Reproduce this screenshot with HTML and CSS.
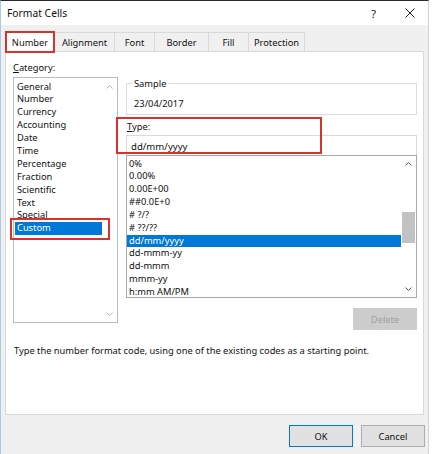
FILE: index.html
```html
<!DOCTYPE html>
<html>
<head>
<meta charset="utf-8">
<link rel="stylesheet" href="styles.css">
</head>
<body>
<div class="dialog">
  <div class="titlebar">
    <span class="title">Format Cells</span>
    <span class="help">?</span>
    <svg class="close" width="10" height="10" viewBox="0 0 10 10"><path d="M0.5 0.5L9.5 9.5M9.5 0.5L0.5 9.5" stroke="#222" stroke-width="1"/></svg>
  </div>
  <div class="tabs">
    <div class="tab active">Number</div>
    <div class="tab t-align">Alignment</div>
    <div class="tab t-font">Font</div>
    <div class="tab t-border">Border</div>
    <div class="tab t-fill">Fill</div>
    <div class="tab t-prot">Protection</div>
  </div>
  <div class="panel">
    <div class="cols">
      <div class="cat-col">
        <div class="label"><u>C</u>ategory:</div>
        <div class="catlist">
          <div class="rows">
            <div class="row">General</div>
            <div class="row">Number</div>
            <div class="row">Currency</div>
            <div class="row">Accounting</div>
            <div class="row">Date</div>
            <div class="row">Time</div>
            <div class="row">Percentage</div>
            <div class="row">Fraction</div>
            <div class="row">Scientific</div>
            <div class="row">Text</div>
            <div class="row">Special</div>
            <div class="row sel">Custom</div>
          </div>
          <div class="vscroll light">
            <svg width="7" height="4" viewBox="0 0 7 4"><path d="M0.5 3.5L3.5 0.5L6.5 3.5" fill="none" stroke="#b5b5b5" stroke-width="1"/></svg>
            <svg width="7" height="4" viewBox="0 0 7 4"><path d="M0.5 0.5L3.5 3.5L6.5 0.5" fill="none" stroke="#b5b5b5" stroke-width="1"/></svg>
          </div>
        </div>
        <div class="annot custom-annot"></div>
      </div>
      <div class="right-col">
        <fieldset class="sample">
          <legend>Sample</legend>
          <div class="sample-val">23/04/2017</div>
        </fieldset>
        <div class="type-area">
          <div class="label type-label"><u>T</u>ype:</div>
          <div class="input">dd/mm/yyyy</div>
          <div class="annot type-annot"></div>
        </div>
        <div class="typelist">
          <div class="rows">
            <div class="row">0%</div>
            <div class="row">0.00%</div>
            <div class="row">0.00E+00</div>
            <div class="row">##0.0E+0</div>
            <div class="row"># ?/?</div>
            <div class="row"># ??/??</div>
            <div class="row sel">dd/mm/yyyy</div>
            <div class="row">dd-mmm-yy</div>
            <div class="row">dd-mmm</div>
            <div class="row">mmm-yy</div>
            <div class="row">h:mm AM/PM</div>
          </div>
          <div class="vscroll">
            <svg width="7" height="4" viewBox="0 0 7 4"><path d="M0.5 3.5L3.5 0.5L6.5 3.5" fill="none" stroke="#606060" stroke-width="1"/></svg>
            <div class="track"><div class="thumb"></div></div>
            <svg width="7" height="4" viewBox="0 0 7 4"><path d="M0.5 0.5L3.5 3.5L6.5 0.5" fill="none" stroke="#606060" stroke-width="1"/></svg>
          </div>
        </div>
        <div class="del-row"><div class="btn disabled">Delete</div></div>
      </div>
    </div>
    <div class="desc">Type the number format code, using one of the existing codes as a starting point.</div>
  </div>
  <div class="footer">
    <div class="btn ok">OK</div>
    <div class="btn">Cancel</div>
  </div>
</div>
</body>
</html>
```

FILE: styles.css
```css
html, body {
  margin: 0;
  padding: 0;
  background: #ffffff;
}
body {
  width: 432px;
  height: 454px;
  overflow: hidden;
  font-family: "Noto Sans", "Open Sans", sans-serif;
  font-size: 9.3px;
  color: #111;
}
.dialog {
  width: 427px;
  height: 453px;
  background: #f0f0f0;
  border-top: 1px solid #2a2a2a;
  border-left: 1px solid #a9cbe6;
  border-right: 1px solid #d4d4d4;
  display: flex;
  flex-direction: column;
}
.titlebar {
  height: 24px;
  background: #fff;
  display: flex;
  align-items: center;
  padding-left: 6px;
  flex: none;
}
.title {
  font-size: 10.3px;
  flex: 1;
}
.help {
  font-size: 11px;
  margin-right: 29px;
}
.close {
  margin-right: 13px;
}
.tabs {
  display: flex;
  margin-top: 7px;
  padding-left: 4px;
  height: 20px;
  flex: none;
}
.tab {
  box-sizing: border-box;
  height: 20px;
  border: 1px solid #d9d9d9;
  border-left: none;
  display: flex;
  align-items: center;
  justify-content: center;
  background: #f0f0f0;
}
.tab.active {
  width: 50px;
  height: 22px;
  margin-top: -1px;
  background: #fff;
  border: 2px solid #d7332c;
  position: relative;
  z-index: 2;
}
.t-align { width: 60px; }
.t-font { width: 40px; }
.t-border { width: 54px; }
.t-fill { width: 40px; }
.t-prot { width: 56px; }
.panel {
  box-sizing: border-box;
  height: 364px;
  margin: -1px 4px 0 4px;
  background: #fff;
  border: 1px solid #d9d9d9;
  padding: 9px 0 0 7px;
  flex: none;
}
.cols {
  display: flex;
  gap: 8px;
}
.cat-col {
  width: 105px;
  position: relative;
}
.label {
  line-height: 13px;
  height: 13px;
  margin-bottom: 3px;
}
.label u {
  text-decoration-thickness: 1px;
  text-underline-offset: 1px;
}
.catlist {
  box-sizing: border-box;
  height: 246px;
  border: 1px solid #bcbcbc;
  display: flex;
}
.rows {
  flex: 1;
  overflow: hidden;
  min-width: 0;
}
.row {
  height: 12.9px;
  line-height: 12.9px;
  padding-left: 2px;
  white-space: nowrap;
}
.catlist .rows {
  padding-left: 1px;
  padding-top: 2.5px;
}
.row.sel {
  background: #0078d7;
  color: #fff;
}
.annot {
  position: absolute;
  box-sizing: border-box;
  border: 2px solid #d7332c;
  pointer-events: none;
}
.custom-annot {
  left: -3px;
  top: 157px;
  width: 100px;
  height: 22px;
}
.vscroll {
  width: 15px;
  display: flex;
  flex-direction: column;
  align-items: center;
  justify-content: space-between;
  padding: 6px 0 6px;
}
.vscroll.light {
  padding: 7px 0 6px;
}
.track {
  flex: 1;
  width: 100%;
  position: relative;
}
.thumb {
  position: absolute;
  left: 1px;
  right: 1px;
  top: 46px;
  height: 31px;
  background: #c2c2c2;
}
.right-col {
  width: 291px;
  padding-top: 16px;
}
.sample {
  margin: 0;
  padding: 0 7px 3px;
  border: 1px solid #dcdcdc;
  height: 38px;
  box-sizing: border-box;
}
.sample legend {
  padding: 0 2px;
  margin-left: -2px;
  line-height: 13px;
}
.sample-val {
  line-height: 13px;
  margin-top: 7px;
}
.type-area {
  position: relative;
  margin-top: 5px;
}
.type-label {
  padding-left: 1px;
  margin-bottom: 2px;
}
.input {
  box-sizing: border-box;
  height: 20px;
  border: 1px solid #d9d9d9;
  border-bottom: none;
  padding-left: 4px;
  padding-top: 2px;
  line-height: 18px;
  font-size: 9.6px;
}
.type-annot {
  left: -10px;
  top: -3px;
  width: 206px;
  height: 37px;
}
.typelist {
  box-sizing: border-box;
  height: 143px;
  border: 1px solid #a8a8a8;
  display: flex;
}
.typelist .rows {
  padding-top: 1.5px;
}
.typelist .row {
  height: 12.85px;
  line-height: 12.85px;
  padding-left: 2px;
}
.del-row {
  display: flex;
  justify-content: flex-end;
  margin-top: 10px;
}
.btn {
  box-sizing: border-box;
  width: 64px;
  height: 22px;
  display: flex;
  align-items: center;
  justify-content: center;
  background: #e1e1e1;
  border: 1px solid #adadad;
}
.btn.disabled {
  background: #cccccc;
  border-color: #cccccc;
  color: #a0a0a0;
}
.desc {
  margin-top: 14px;
  line-height: 13px;
  padding-left: 1px;
}
.footer {
  display: flex;
  justify-content: flex-end;
  gap: 8px;
  margin-top: 10px;
  padding-right: 3px;
}
.btn.ok {
  border: 1px solid #0078d7;
}
```
